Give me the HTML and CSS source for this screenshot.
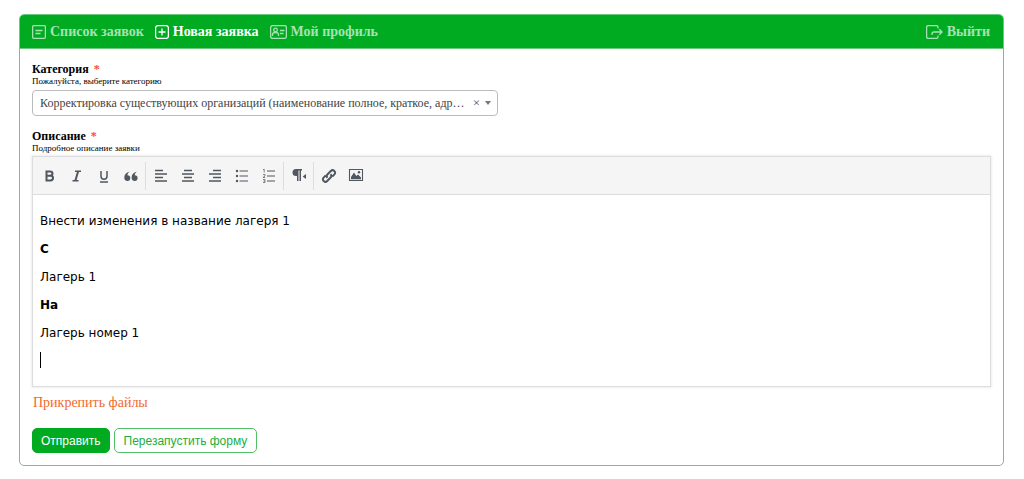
FILE: index.html
```html
<!DOCTYPE html>
<html lang="ru">
    <head>
        <meta charset="utf-8">
        <meta name="viewport" content="width=device-width, initial-scale=1">
        <title>Новая заявка</title>
        <link rel="stylesheet" href="styles.css">
    </head>
    <body>
        <main class="card">
            <nav class="navbar">
                <a href="#" class="nav-link">
                    <svg class="nav-icon" viewBox="0 0 14 14"><rect x="0.6" y="0.6" width="12.8" height="12.8" rx="1.5"/><path d="M3.5 5.5h7M3.5 8.5h5"/></svg>
                    Список заявок
                </a>
                <a href="#" class="nav-link active">
                    <svg class="nav-icon" viewBox="0 0 14 14"><rect x="0.6" y="0.6" width="12.8" height="12.8" rx="2.5"/><path d="M7 3.5v7M3.5 7h7"/></svg>
                    Новая заявка
                </a>
                <a href="#" class="nav-link">
                    <svg class="nav-icon wide" viewBox="0 0 17 14"><rect x="0.6" y="0.6" width="15.8" height="12.8" rx="2"/><circle cx="5.5" cy="5" r="1.8"/><path d="M2.5 11V9.5Q2.5 7.5 5.5 7.5T8.5 9.5V11M10 5.5h4.5M10 8.5h3.5"/></svg>
                    Мой профиль
                </a>
                <a href="#" class="nav-link logout">
                    <svg class="nav-icon wide" viewBox="0 0 17 14"><path d="M12 3.5V2.2Q12 0.6 10.4 0.6H2.2Q0.6 0.6 0.6 2.2V11.8Q0.6 13.4 2.2 13.4H10.4Q12 13.4 12 11.8V10.5M6 10V9Q6 7 8 7H16M13.3 4.3L16 7L13.3 9.7"/></svg>
                    Выйти
                </a>
            </nav>
            <form class="ticket-form">
                <div class="field">
                    <label for="category" class="field-label">Категория <span class="required">*</span></label>
                    <p class="hint">Пожалуйста, выберите категорию</p>
                    <div class="select-box">
                        <select id="category" class="category-select">
                            <option>Корректировка существующих организаций (наименование полное, краткое, адрес, контакты)</option>
                        </select>
                        <button type="button" class="clear-button" aria-label="Очистить">×</button>
                        <svg class="arrow" viewBox="0 0 6 4"><path d="M0 0h6L3 4z"/></svg>
                    </div>
                </div>

                <div class="field">
                    <label id="description-label" class="field-label">Описание <span class="required">*</span></label>
                    <p class="hint">Подробное описание заявки</p>
                    <div class="editor">
                        <div class="toolbar">
                            <div class="tool-group">
                                <button type="button" class="tool" aria-label="Жирный"><svg viewBox="0 0 16 16"><path class="line thick" d="M4.5 3.5H8Q10.5 3.5 10.5 5.6T8 7.8H4.5ZM4.5 7.8H8.5Q11 7.8 11 10.1T8.5 12.5H4.5Z"/></svg></button>
                                <button type="button" class="tool" aria-label="Курсив"><svg viewBox="0 0 16 16"><path class="line" d="M6 3.2H12M3.5 12.8H9.5"/><path class="line thick" d="M9.2 3.2L6.3 12.8"/></svg></button>
                                <button type="button" class="tool" aria-label="Подчёркнутый"><svg viewBox="0 0 16 16"><path class="line" d="M5 3V8Q5 11.3 8 11.3T11 8V3M4 14H12"/></svg></button>
                                <button type="button" class="tool" aria-label="Цитата"><svg viewBox="0 0 16 16"><path d="M6.5 3.5Q4.5 5 4.4 7.2Q7.3 7.2 7.3 10Q7.3 13 4.4 13Q1.3 13 1.3 9.2Q1.5 5 6.5 3.5ZM13.8 3.5Q11.8 5 11.7 7.2Q14.6 7.2 14.6 10Q14.6 13 11.7 13Q8.6 13 8.6 9.2Q8.8 5 13.8 3.5Z"/></svg></button>
                            </div>
                            <div class="tool-group">
                                <button type="button" class="tool" aria-label="По левому краю"><svg viewBox="0 0 16 16"><path class="line" d="M2 2.5H10M2 6H14M2 9.5H10M2 13H14"/></svg></button>
                                <button type="button" class="tool" aria-label="По центру"><svg viewBox="0 0 16 16"><path class="line" d="M4 2.5H12M2 6H14M4 9.5H12M2 13H14"/></svg></button>
                                <button type="button" class="tool" aria-label="По правому краю"><svg viewBox="0 0 16 16"><path class="line" d="M6 2.5H14M2 6H14M6 9.5H14M2 13H14"/></svg></button>
                                <button type="button" class="tool" aria-label="Маркированный список"><svg viewBox="0 0 16 16"><path class="line thin" d="M5.5 3H14M5.5 8H14M5.5 13H14"/><circle cx="3" cy="3" r="1.2"/><circle cx="3" cy="8" r="1.2"/><circle cx="3" cy="13" r="1.2"/></svg></button>
                                <button type="button" class="tool" aria-label="Нумерованный список"><svg viewBox="0 0 16 16"><path class="line thin" d="M6 3H14M6 8H14M6 13H14"/><path class="line hair" d="M2 1.8L3.2 1.2V4.5M2 6.5H4V8L2 9.5H4.3M2 11.5H4V14.5H2M2.5 13H4"/></svg></button>
                            </div>
                            <div class="tool-group">
                                <button type="button" class="tool" aria-label="Направление текста"><svg viewBox="0 0 16 16"><path d="M5 1H11V2.5H10V13H8.5V2.5H7.5V13H6V8H5Q1.5 8 1.5 4.5T5 1ZM15 6V11L11.7 8.5Z"/></svg></button>
                            </div>
                            <div class="tool-group">
                                <button type="button" class="tool" aria-label="Ссылка"><svg viewBox="0 0 16 16"><path class="line thick" d="M6.5 9.8Q4.8 8 6.6 6.2L9.8 3Q11.5 1.3 13.3 3T13.2 6.6L11.3 8.5M9.5 6.2Q11.2 8 9.4 9.8L6.2 13Q4.5 14.7 2.7 13T2.8 9.4L4.7 7.5"/></svg></button>
                                <button type="button" class="tool" aria-label="Изображение"><svg viewBox="0 0 16 16"><path class="line thin" d="M1.5 1.5H14.5V12.5H1.5Z"/><path d="M3 11.2V9L6 4.5L8.3 8L10 6.5L13 9.5V11.2Z"/><circle cx="11" cy="4.3" r="1.2"/></svg></button>
                            </div>
                        </div>
                        <div class="editor-text" contenteditable="true" role="textbox" aria-multiline="true" aria-labelledby="description-label">
                            <p>Внести изменения в название лагеря 1</p>
                            <p><b>С</b></p>
                            <p>Лагерь 1</p>
                            <p><b>На</b></p>
                            <p>Лагерь номер 1</p>
                            <p class="caret-line"><br></p>
                        </div>
                    </div>
                </div>

                <a href="#" class="attach-link">Прикрепить файлы</a>

                <div class="buttons">
                    <button type="submit" class="button submit-button">Отправить</button>
                    <button type="reset" class="button">Перезапустить форму</button>
                </div>
            </form>
        </main>
    </body>
</html>
```

FILE: styles.css
```css
* {
    box-sizing: border-box;
}

body {
    margin: 14px 20px 13px 19px;
    background-color: white;
    color: black;
    font-family: "Liberation Serif", "Times New Roman", serif;
}

p {
    margin: 0;
}

.card {
    border: 1px solid #6cca80;
    border-radius: 5px;
    overflow: hidden;
}

.navbar {
    display: flex;
    align-items: center;
    gap: 11px;
    height: 34px;
    padding: 0 13px 0 12px;
    background-color: #00ab22;
    border-bottom: 1px solid #6cca80;
}

.nav-link {
    display: flex;
    align-items: center;
    gap: 4px;
    color: #a9e2b2;
    font-size: 14px;
    font-weight: bold;
    text-decoration: none;
}

.nav-link.active {
    color: white;
}

.nav-icon {
    width: 14px;
    height: 14px;
    fill: none;
    stroke: currentColor;
    stroke-width: 1.3;
}

.nav-icon.wide {
    width: 17px;
}

.logout {
    margin-left: auto;
}

.ticket-form {
    padding: 13px 12px 12px;
}

.field {
    margin-bottom: 13px;
}

.field-label {
    display: block;
    font-size: 12px;
    font-weight: bold;
    line-height: 14px;
}

.required {
    margin-left: 2px;
    color: #ff4a40;
}

.hint {
    font-size: 9px;
    line-height: 11px;
}

.select-box {
    display: flex;
    align-items: center;
    width: 50%;
    max-width: 466px;
    height: 26px;
    margin-top: 3px;
    padding: 0 6px 0 7px;
    border: 1px solid #bbb;
    border-radius: 4px;
}

.category-select {
    flex: 1;
    min-width: 0;
    padding: 0;
    border: none;
    background: none;
    color: #444;
    font-family: inherit;
    font-size: 12px;
    text-overflow: ellipsis;
    appearance: none;
}

.clear-button {
    padding: 0 5px;
    border: none;
    background: none;
    color: #555;
    font-family: inherit;
    font-size: 13px;
    cursor: pointer;
}

.arrow {
    width: 6px;
    height: 4px;
    fill: #777;
}

.editor {
    margin-top: 2px;
    border: 1px solid #ddd;
    box-shadow: 0 0 2px 1px #eee;
}

.toolbar {
    display: flex;
    align-items: center;
    height: 38px;
    padding: 0 2px;
    background-color: #f5f5f5;
    border-bottom: 1px solid #ddd;
}

.tool-group {
    display: flex;
    padding: 0 1px;
}

.tool-group + .tool-group {
    border-left: 1px solid #ddd;
}

.tool {
    display: flex;
    align-items: center;
    justify-content: center;
    width: 27px;
    height: 28px;
    padding: 0;
    border: none;
    background: none;
    cursor: pointer;
}

.tool svg {
    width: 16px;
    height: 16px;
    fill: #50575e;
}

.tool .line {
    fill: none;
    stroke: #50575e;
    stroke-width: 1.5;
}

.tool .thick {
    stroke-width: 2;
}

.tool .thin {
    stroke-width: 1.1;
}

.tool .hair {
    stroke-width: 0.7;
}

.editor-text {
    padding: 12px 7px 11px;
    font-family: "DejaVu Sans", Verdana, sans-serif;
    font-size: 12px;
    line-height: 28px;
    outline: none;
}

/* text cursor on the empty last line */
.caret-line {
    height: 16px;
    margin: 5px 0 7px;
    border-left: 1px solid black;
    line-height: 16px;
}

.attach-link {
    display: block;
    width: fit-content;
    margin-top: -5px;
    padding-left: 1px;
    color: #f26a2e;
    font-size: 14px;
    line-height: 16px;
    text-decoration: none;
}

.buttons {
    display: flex;
    gap: 4px;
    margin-top: 17px;
}

.button {
    height: 25px;
    padding: 0 9px;
    border: 1px solid #4fbf67;
    border-radius: 5px;
    background-color: white;
    color: #1cae3b;
    font-family: "Liberation Sans", Arial, sans-serif;
    font-size: 12px;
    cursor: pointer;
}

.submit-button {
    padding: 0 8px;
    border-color: #00ab22;
    background-color: #00ab22;
    color: white;
}
```
